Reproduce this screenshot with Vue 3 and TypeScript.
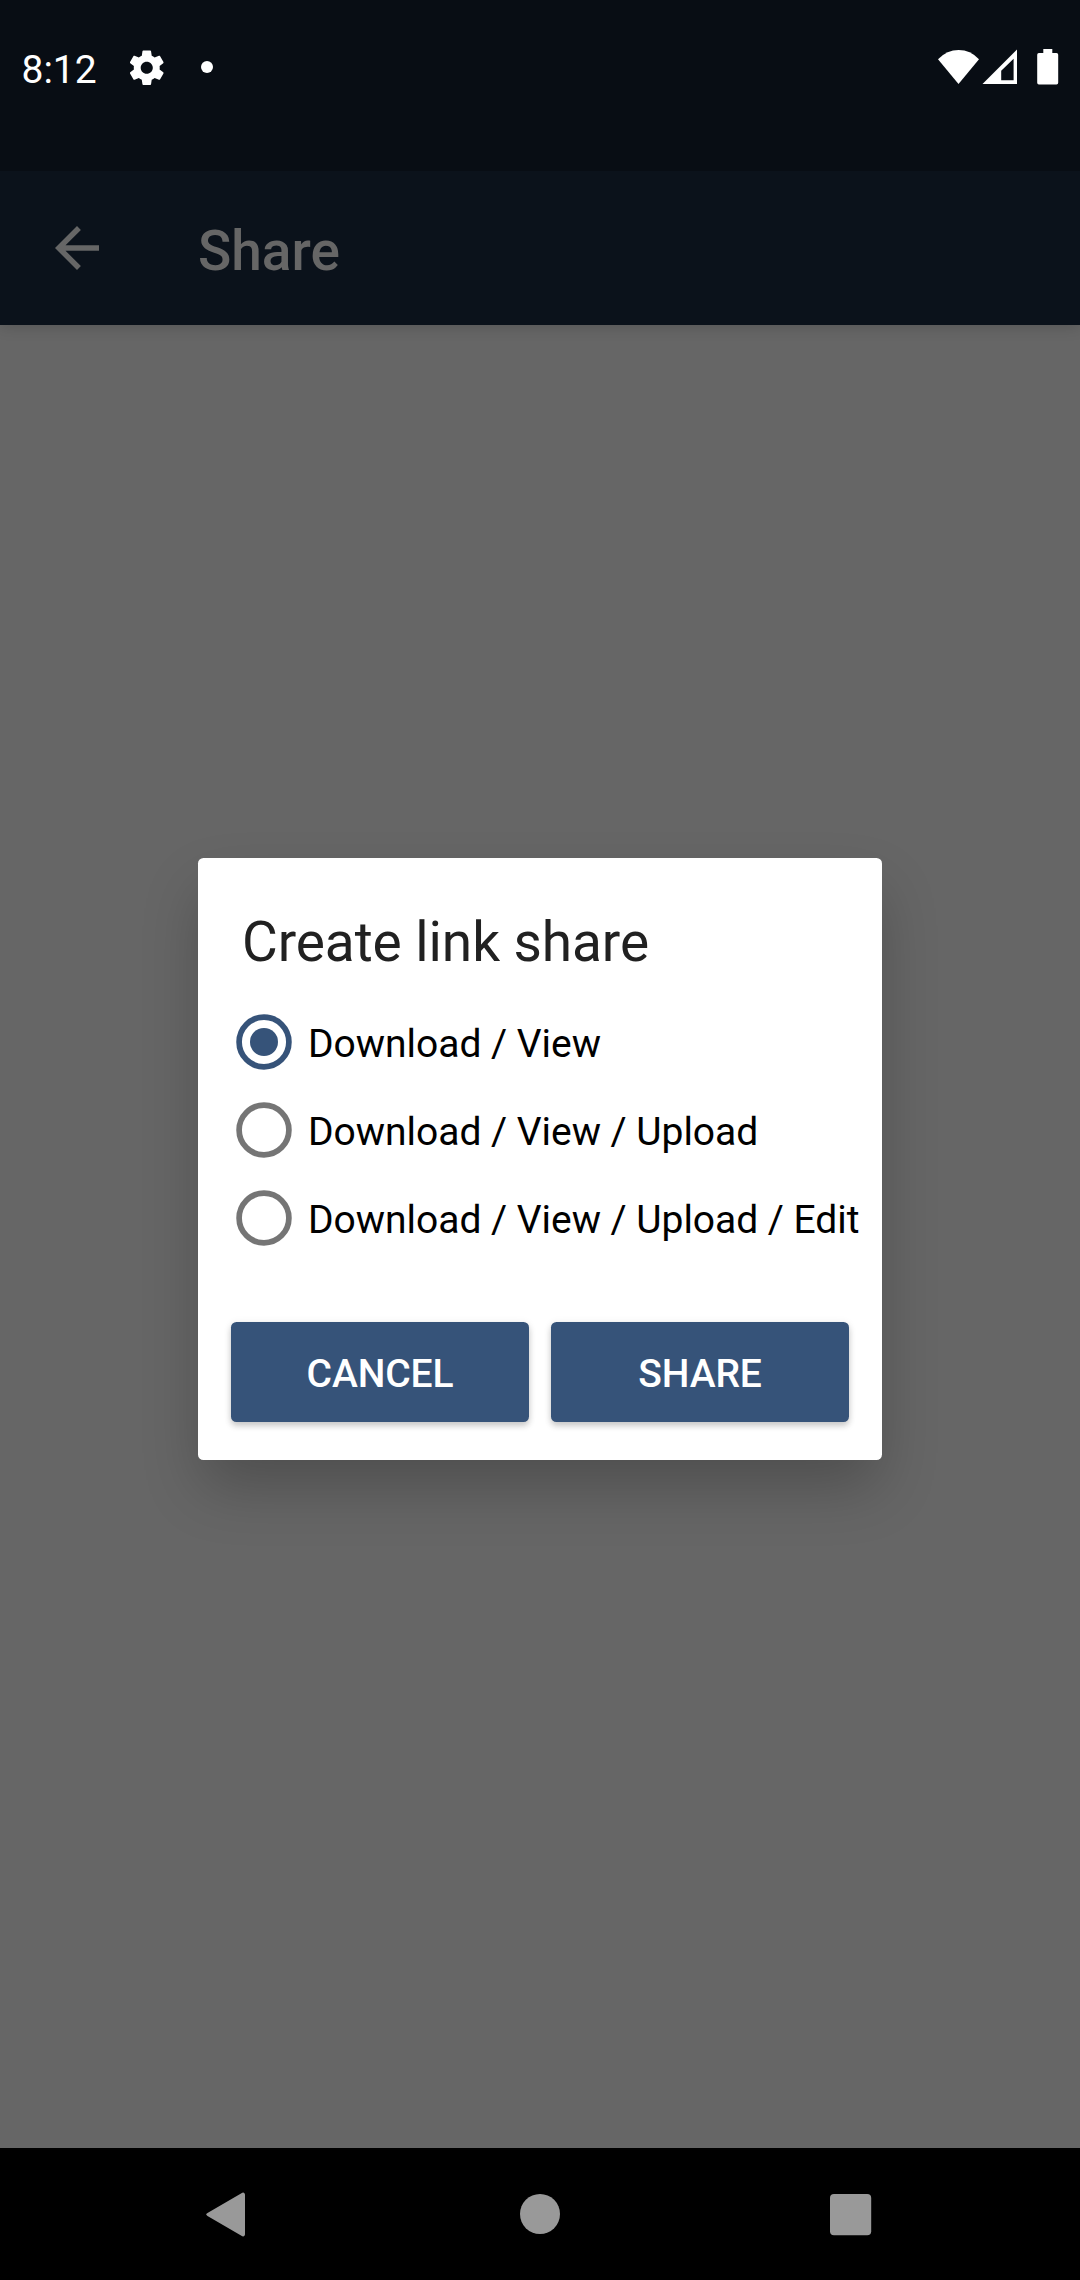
<script setup lang="ts">
import { ref } from 'vue'

interface ShareOption {
  id: string
  label: string
}

const options: ShareOption[] = [
  { id: 'view', label: 'Download / View' },
  { id: 'upload', label: 'Download / View / Upload' },
  { id: 'edit', label: 'Download / View / Upload / Edit' },
]

const selected = ref<string>('view')
</script>

<template>
  <div class="screen">
    <header class="status-bar">
      <span class="time">8:12</span>
      <svg class="gear" viewBox="0 0 24 24">
        <path
          d="M19.43 12.98c.04-.32.07-.64.07-.98s-.03-.66-.07-.98l2.11-1.65c.19-.15.24-.42.12-.64l-2-3.46c-.12-.22-.39-.3-.61-.22l-2.49 1c-.52-.4-1.08-.73-1.69-.98l-.38-2.65C14.46 2.18 14.25 2 14 2h-4c-.25 0-.46.18-.49.42l-.38 2.65c-.61.25-1.17.59-1.69.98l-2.49-1c-.23-.09-.49 0-.61.22l-2 3.46c-.13.22-.07.49.12.64l2.11 1.65c-.04.32-.07.65-.07.98s.03.66.07.98l-2.11 1.65c-.19.15-.24.42-.12.64l2 3.46c.12.22.39.3.61.22l2.49-1c.52.4 1.08.73 1.69.98l.38 2.65c.03.24.24.42.49.42h4c.25 0 .46-.18.49-.42l.38-2.65c.61-.25 1.17-.59 1.69-.98l2.49 1c.23.09.49 0 .61-.22l2-3.46c.12-.22.07-.49-.12-.64l-2.11-1.65zM12 15.5c-1.93 0-3.5-1.57-3.5-3.5s1.57-3.5 3.5-3.5 3.5 1.57 3.5 3.5-1.57 3.5-3.5 3.5z"
        />
      </svg>
      <span class="dot"></span>
      <svg class="indicators" viewBox="0 0 122 36">
        <path d="M0 10.2Q9 1 20.7 1T41 10.2L20.5 35z" />
        <path
          fill-rule="evenodd"
          d="M44.5 35L79 0.5V35zM63.2 31.3H75.6V9.7L63.2 21.7z"
        />
        <path d="M105.3 0h9v4h4.200a1.700 1.700 0 0 1 1.700 1.700v28a1.700 1.700 0 0 1-1.700 1.700h-17.600a1.700 1.700 0 0 1-1.700-1.700v-28a1.700 1.700 0 0 1 1.700-1.700h4.400z" />
      </svg>
    </header>

    <nav class="toolbar">
      <svg class="back" viewBox="0 0 24 24">
        <path d="M20 11H7.830l5.590-5.590L12 4l-8 8 8 8 1.410-1.410L7.830 13H20v-2z" />
      </svg>
      <h1>Share</h1>
    </nav>

    <main class="content">
      <section class="dialog" role="dialog">
        <h2>Create link share</h2>
        <ul class="options">
          <li v-for="option in options" :key="option.id" @click="selected = option.id">
            <svg class="radio" :class="{ checked: selected === option.id }" viewBox="0 0 56 56">
              <circle class="ring" cx="28" cy="28" r="24.9" />
              <circle v-if="selected === option.id" class="mark" cx="28" cy="28" r="14" />
            </svg>
            <span class="label">{{ option.label }}</span>
          </li>
        </ul>
        <div class="actions">
          <button type="button">CANCEL</button>
          <button type="button">SHARE</button>
        </div>
      </section>
    </main>

    <footer class="nav-bar">
      <svg viewBox="0 0 66 66">
        <path d="M15.500 34.900L50.300 55.300Q52.500 56 53 53.500V13.500Q52.500 11 50.300 11.700L15.500 32.100Q12.800 33.500 15.500 34.900z" />
      </svg>
      <svg viewBox="0 0 66 66"><circle cx="33" cy="33" r="20" /></svg>
      <svg viewBox="0 0 66 66"><rect x="9" y="13" width="41.200" height="41.300" rx="4" /></svg>
    </footer>
  </div>
</template>

<style>
body {
  margin: 0;
  background: #666;
}
</style>

<style scoped>
.screen {
  width: 1080px;
  height: 2280px;
  display: flex;
  flex-direction: column;
  overflow: hidden;
  background: #666;
  font-family: Roboto, "Liberation Sans", sans-serif;
}

.status-bar {
  height: 171px;
  flex: none;
  box-sizing: border-box;
  padding: 46px 22px 0 21.500px;
  display: flex;
  align-items: flex-start;
  background: #080d14;
  color: #fff;
}

.status-bar svg {
  fill: #fff;
}

.time {
  width: 104px;
  margin-top: 1px;
  font-size: 39px;
  line-height: 46px;
}

.gear {
  width: 41.500px;
  height: 41.500px;
  margin-top: 0.500px;
}

.dot {
  width: 12px;
  height: 12px;
  margin: 15px 0 0 34px;
  border-radius: 50%;
  background: #fff;
}

.indicators {
  width: 122px;
  height: 36px;
  margin: 3px -2px 0 auto;
}

.toolbar {
  height: 154px;
  flex: none;
  display: flex;
  align-items: center;
  box-sizing: border-box;
  padding-left: 44px;
  background: #0b121b;
  box-shadow: 0 2px 14px rgba(0, 0, 0, 0.16);
  clip-path: inset(0 0 -30px 0);
  z-index: 1;
}

.back {
  width: 66px;
  height: 66px;
  fill: #666;
}

h1 {
  margin: 6px 0 0 88px;
  font-size: 55px;
  font-weight: 500;
  line-height: 64px;
  color: #666;
}

.content {
  flex: 1;
  display: flex;
  justify-content: center;
  align-items: flex-start;
  padding-top: 533px;
}

.dialog {
  width: 684px;
  height: 602px;
  box-sizing: border-box;
  padding: 51px 33px 38px;
  display: flex;
  flex-direction: column;
  border-radius: 5.500px;
  background: #fff;
  box-shadow: 0 30px 60px -4px rgba(0, 0, 0, 0.235);
}

h2 {
  margin: 0 0 0 11px;
  font-size: 55px;
  font-weight: 400;
  line-height: 66px;
  letter-spacing: -0.080px;
  color: #212121;
}

.options {
  list-style: none;
  margin: 23px 0 0;
  padding: 0 0 0 5px;
}

.options li {
  height: 88px;
  display: flex;
  align-items: center;
  white-space: nowrap;
}

.radio {
  width: 56px;
  height: 56px;
  flex: none;
}

.ring {
  fill: none;
  stroke: #757575;
  stroke-width: 5.700;
}

.checked .ring {
  stroke: #365379;
}

.mark {
  fill: #365379;
}

.label {
  margin: 4px 0 0 16px;
  font-size: 39px;
  line-height: 46px;
  letter-spacing: -0.030px;
  color: #000;
}

.actions {
  display: flex;
  gap: 22px;
  margin-top: auto;
}

button {
  width: 298px;
  height: 100px;
  padding: 3px 0 0;
  border: 0;
  border-radius: 5.500px;
  background: #365379;
  color: #fff;
  font: 500 39px/46px Roboto, "Liberation Sans", sans-serif;
  letter-spacing: -0.100px;
  box-shadow: 0 4px 6px rgba(0, 0, 0, 0.18), 0 1px 8px rgba(0, 0, 0, 0.08);
}

.nav-bar {
  height: 132px;
  flex: none;
  box-sizing: border-box;
  padding: 0 193px 0 192px;
  display: flex;
  align-items: center;
  justify-content: space-between;
  background: #000;
}

.nav-bar svg {
  width: 66px;
  height: 66px;
  fill: #999;
}
</style>
